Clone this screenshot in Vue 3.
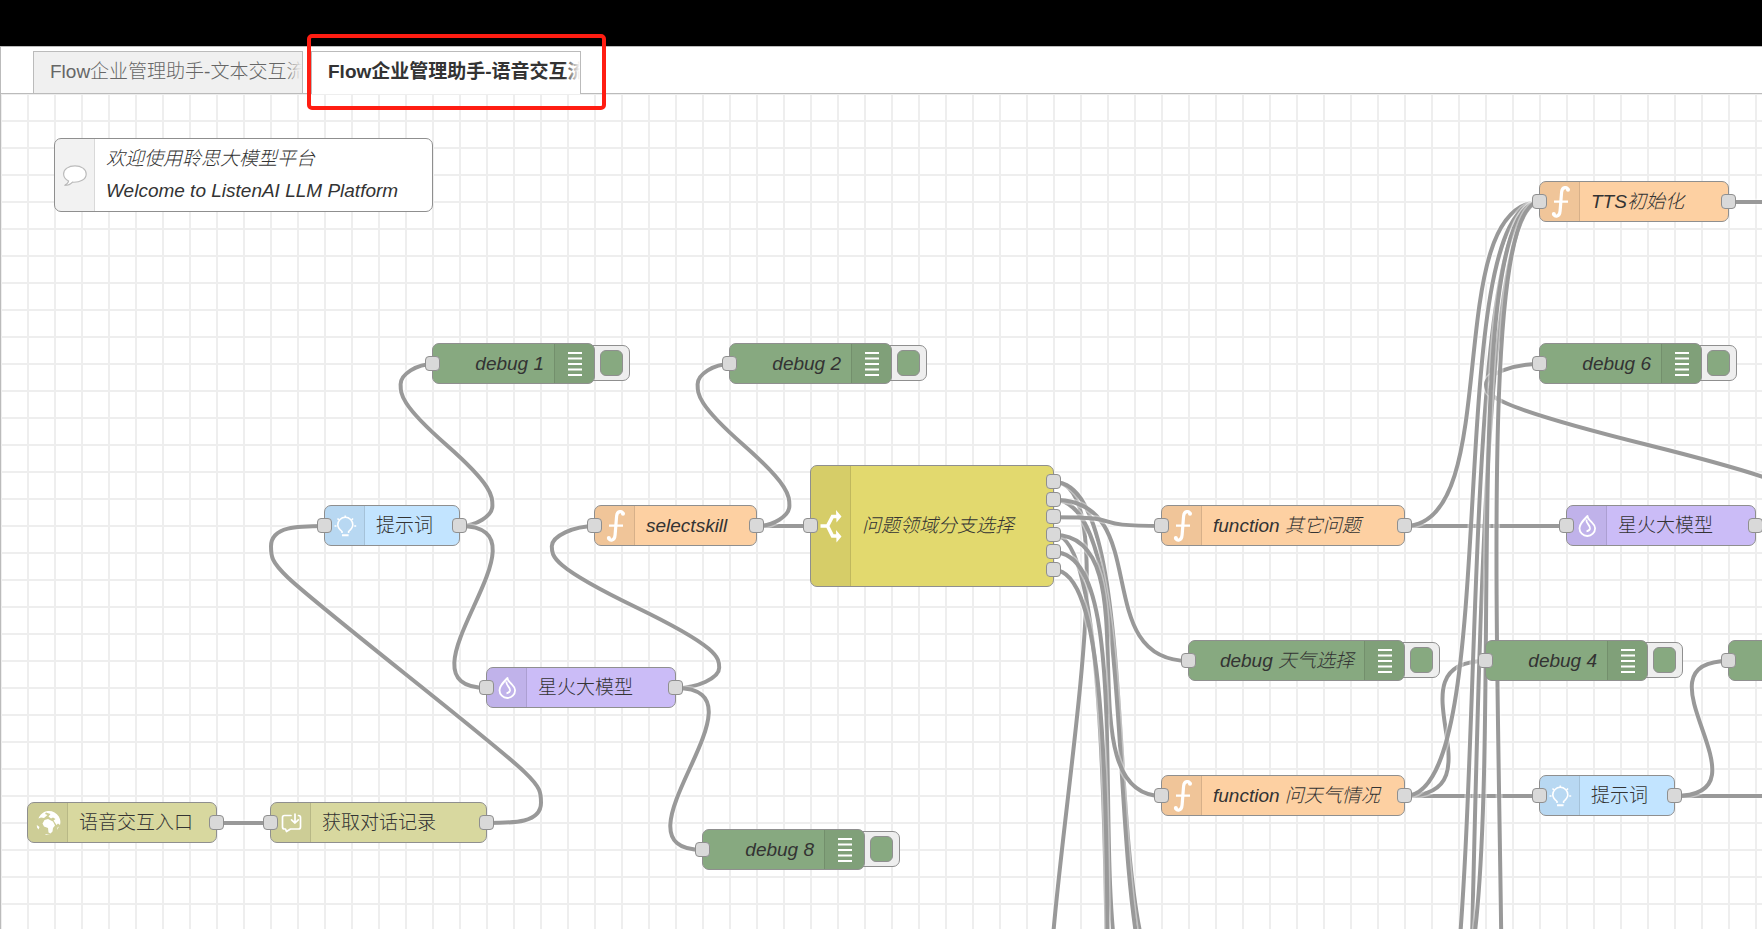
<script setup>
const CELL = 27
const ZOOM = CELL / 20

const tabs = [
  { label: 'Flow企业管理助手-文本交互流程', active: false },
  { label: 'Flow企业管理助手-语音交互流程', active: true },
]

// Columns and rows are counted in grid cells; row is the vertical centre of the node.
const nodes = [
  { col: 2, row: 3, w: 14, kind: 'comment', icon: 'comment', lines: ['欢迎使用聆思大模型平台', 'Welcome to ListenAI LLM Platform'] },
  { col: 16, row: 10, w: 6, kind: 'debug', label: 'debug 1' },
  { col: 27, row: 10, w: 6, kind: 'debug', label: 'debug 2' },
  { col: 57, row: 10, w: 6, kind: 'debug', label: 'debug 6' },
  { col: 57, row: 4, w: 7, kind: 'function', icon: 'function', label: 'TTS初始化' },
  { col: 12, row: 16, w: 5, kind: 'prompt', icon: 'bulb', label: '提示词' },
  { col: 22, row: 16, w: 6, kind: 'function', icon: 'function', label: 'selectskill' },
  { col: 30, row: 16, w: 9, kind: 'switch', icon: 'switch', label: '问题领域分支选择', outs: 6 },
  { col: 43, row: 16, w: 9, kind: 'function', icon: 'function', label: 'function 其它问题' },
  { col: 58, row: 16, w: 7, kind: 'model', icon: 'flame', label: '星火大模型' },
  { col: 44, row: 21, w: 8, kind: 'debug', label: 'debug 天气选择' },
  { col: 55, row: 21, w: 6, kind: 'debug', label: 'debug 4' },
  { col: 64, row: 21, w: 6, kind: 'debug', label: '' },
  { col: 18, row: 22, w: 7, kind: 'model', icon: 'flame', label: '星火大模型' },
  { col: 43, row: 26, w: 9, kind: 'function', icon: 'function', label: 'function 问天气情况' },
  { col: 57, row: 26, w: 5, kind: 'prompt', icon: 'bulb', label: '提示词' },
  { col: 1, row: 27, w: 7, kind: 'entry', icon: 'globe', label: '语音交互入口', noInput: true },
  { col: 10, row: 27, w: 8, kind: 'entry', icon: 'history', label: '获取对话记录' },
  { col: 26, row: 28, w: 6, kind: 'debug', label: 'debug 8' },
]

const outRow = (row, index, count) => row + (index - (count - 1) / 2) * 0.65
const sw = (index) => [39, outRow(16, index, 6)]

const links = [
  [[8, 27], [10, 27]],
  [[18, 27], [12, 16]],
  [[17, 16], [16, 10]],
  [[17, 16], [18, 22]],
  [[25, 22], [22, 16]],
  [[25, 22], [26, 28]],
  [[28, 16], [30, 16]],
  [[28, 16], [27, 10]],
  [sw(0), [40, 38]],
  [sw(0), [44, 34]],
  [sw(1), [44, 35]],
  [sw(1), [44, 21]],
  [sw(2), [43, 16]],
  [sw(3), [43, 60]],
  [sw(3), [43, 26]],
  [sw(4), [43, 35]],
  [sw(5), [43, 48]],
  [[52, 16], [58, 16]],
  [[52, 26], [57, 26]],
  [[62, 26], [72, 26]],
  [[62, 26], [64, 21]],
  [[52, 26], [55, 21]],
  [[64, 4], [70, 4]],
  [[52, 16], [57, 4]],
  [[52, 26], [57, 4]],
  [[52, 39], [57, 4]],
  [[65, 16], [57, 10]],
  [[52, 57], [57, 4]],
  [[53, 35], [57, 4]],
  [[54, 50], [57, 4]],
]

const REACH = 100
const HALF = 15

function wirePath([from, to]) {
  const [ox, oy, dx0, dy0] = [...from, ...to].map((v) => v * 20)
  const dx = dx0 - ox
  const dy = dy0 - oy
  const dist = Math.hypot(dx, dy)
  const p = (x, y) => `${Math.round(x * ZOOM * 10) / 10} ${Math.round(y * ZOOM * 10) / 10}`

  if (dx > 0) {
    const bend = dist < REACH ? 0.75 - 0.75 * ((REACH - dist) / REACH) : 0.75
    return `M${p(ox, oy)}C${p(ox + REACH * bend, oy)} ${p(dx0 - REACH * bend, dy0)} ${p(dx0, dy0)}`
  }

  const bend = 0.4 - 0.2 * Math.max(0, (REACH - Math.min(Math.abs(dx), Math.abs(dy))) / REACH)
  const dir = dy > 0 ? 1 : -1
  const lo = dy > 0 ? Math.min : Math.max
  const hi = dy > 0 ? Math.max : Math.min
  const midX = dx0 - dx / 2
  const midY = dy0 - dy / 2
  const y1 = (dy0 + midY) / 2
  const topX = ox + REACH * bend
  const topY = lo(y1 - dy / 2, oy + dir * HALF)
  const botX = dx0 - REACH * bend
  const botY = hi(y1, dy0 - dir * HALF)
  const x1 = (ox + topX) / 2
  const cp = [
    [x1, oy],
    [topX, hi(oy, topY - dir * HALF)],
    [x1, lo(midY, topY + dir * HALF)],
    [botX, hi(midY, botY - dir * HALF)],
    [(dx0 + botX) / 2, dy0],
  ]
  if (cp[2][1] === topY + dir * HALF) {
    if (Math.abs(dy) < HALF * 10) {
      cp[1][1] = topY - (dir * HALF) / 2
      cp[3][1] = botY - (dir * HALF) / 2
    }
    cp[2][0] = topX
  }
  return `M${p(ox, oy)}C${p(...cp[0])} ${p(...cp[1])} ${p(topX, topY)}` +
    `S${p(...cp[2])} ${p(midX, midY)}S${p(...cp[3])} ${p(botX, botY)}S${p(...cp[4])} ${p(dx0, dy0)}`
}

const wires = links.map(wirePath)

function nodeStyle(n) {
  const height = n.kind === 'comment' ? 74 : n.kind === 'switch' ? 122 : 41
  return {
    left: `${n.col * CELL - 1}px`,
    top: `${n.row * CELL - Math.ceil(height / 2)}px`,
    width: `${n.w * CELL + 1}px`,
    height: `${height}px`,
  }
}

function ports(n) {
  if (n.kind === 'comment') return []
  const list = []
  if (!n.noInput) list.push([n.col, n.row])
  if (n.kind !== 'debug') {
    const count = n.outs || 1
    for (let i = 0; i < count; i++) list.push([n.col + n.w, outRow(n.row, i, count)])
  }
  return list.map(([c, r]) => ({ left: `${c * CELL - 8}px`, top: `${Math.round(r * CELL) - 8}px` }))
}
</script>

<template>
  <div class="page">
    <div class="band"></div>
    <nav class="tabbar" aria-label="Flows">
      <ul class="tabs">
        <li v-for="t in tabs" :key="t.label" class="tab" :class="{ active: t.active }">
          <a href="#" class="tab-link">{{ t.label }}</a>
          <span v-if="t.active" class="marker"></span>
        </li>
      </ul>
    </nav>

    <main class="canvas">
      <svg class="wires" aria-hidden="true">
        <defs>
          <symbol id="i-function" viewBox="0 0 40 40">
            <path d="M28 8C27.400 4.800 22.200 4.300 21.600 10.200L20.100 28.800C19.600 35.200 15 35.200 13.600 31.800" fill="none" stroke="#fff" stroke-width="3.200" />
            <circle cx="28" cy="7.800" r="2" fill="#fff" /><circle cx="13.800" cy="31.900" r="2" fill="#fff" />
            <path d="M14 19.700H28" stroke="#fff" stroke-width="2.200" />
          </symbol>
          <symbol id="i-debug" viewBox="0 0 40 40">
            <path d="M13 9H27M13 14.500H27M13 20H27M13 25.500H27M13 31H27" stroke="#fff" stroke-width="2" />
          </symbol>
          <symbol id="i-switch" viewBox="0 0 40 40">
            <path d="M9.500 20H16.500L21.500 10.500H26M16.500 20L21.500 30H26" fill="none" stroke="#fff" stroke-width="3.600" />
            <path d="M25 4L30.500 10.500L25.500 16.500ZM25 24L30.500 30.500L25.500 36.500Z" fill="#fff" />
          </symbol>
          <symbol id="i-bulb" viewBox="0 0 40 40">
            <g fill="none" stroke="#fff" stroke-width="1.600">
              <path d="M17 27V25.500C14.500 23.500 12.800 21.500 12.800 18.800A7.500 7.500 0 0 1 27.800 18.800C27.800 21.500 26 23.500 23.600 25.500V27" />
              <path d="M17 29.300H23.600" stroke-width="2" />
              <path d="M20.300 9.500V11.500M12.500 12.500L14 14M28 12.500L26.600 14M9.500 20H11.500M29.200 20H31.200" />
            </g>
          </symbol>
          <symbol id="i-flame" viewBox="0 0 40 40">
            <path d="M20.500 10C16 14.500 12.500 18 12.500 22.200A7.800 7.800 0 0 0 28.100 22.200C28.100 19 26 17.500 24 15.500C22 13.500 20.500 12.500 20.500 10ZM19.500 13.500C18.500 17.500 23.500 19 23 22.500C22.700 24.300 21 25 19.500 25.300" fill="none" stroke="#fff" stroke-width="1.800" stroke-linejoin="round" />
          </symbol>
          <symbol id="i-history" viewBox="0 0 40 40">
            <g fill="none" stroke="#fff" stroke-width="1.700" stroke-linecap="round" stroke-linejoin="round">
              <path d="M20 12.500H13.500Q11.500 12.500 11.500 14.500V24Q11.500 26 13.500 26H14.500L15.500 28.500L19.500 26H27.500Q29.500 26 29.500 24V14.500Q29.500 12.500 27.500 12.500" />
              <path d="M24 11V19.500M20.500 16.800L24 20L27.300 16.800" />
            </g>
          </symbol>
          <symbol id="i-globe" viewBox="0 0 40 40">
            <path d="M10.500 15.500C12 11.500 15.500 8.500 20 8C24 7.600 28.500 9.500 30.800 13.500C32.500 16.500 32.800 19 32 22L30 20.500L28.500 22L25.500 17.500L27.500 16L25 14.500L23 15.500L20.500 13.500L22.500 11L18 9.500L17 11L19.500 12L16 15L13 14.500ZM16.500 17L20 16L25 18.500L27 22.500L25 25L24.500 28.500L22.500 30.500L20.500 29.500L20 25L16 23.500L14.500 20.500ZM8.800 22L11.500 24L10.500 26.500L9 24.500ZM29.500 24.500L31 23.500L29 27ZM18 31L22 32L17 31.800Z" fill="#fff" />
          </symbol>
          <symbol id="i-comment" viewBox="0 0 40 40">
            <path d="M20 10.800C13.500 10.800 8.600 14.300 8.600 19C8.600 22 10.600 24.500 13.600 26C13.200 28.200 11.500 29.500 9.500 30.500C13.200 30.500 16 29 17.500 27.200C25 27.600 31.200 24.500 31.200 19C31.200 14.300 26.300 10.800 20 10.800Z" fill="#fff" stroke="#bbb" stroke-width="1.200" />
          </symbol>
        </defs>
        <g v-for="(d, i) in wires" :key="i">
          <path class="wire-outline" :d="d" />
          <path class="wire" :d="d" />
        </g>
      </svg>

      <template v-for="(n, i) in nodes" :key="i">
        <div class="node" :class="n.kind" :style="nodeStyle(n)">
          <button v-if="n.kind === 'debug'" type="button" class="toggle" :aria-label="`${n.label || 'debug'} on/off`">
            <span class="toggle-inner"></span>
          </button>
          <div class="body">
            <div class="strip">
              <svg class="icon" aria-hidden="true"><use :href="`#i-${n.icon || 'debug'}`" /></svg>
            </div>
            <div class="label">
              <template v-if="n.lines"><p v-for="l in n.lines" :key="l" class="line">{{ l }}</p></template>
              <template v-else>{{ n.label }}</template>
            </div>
          </div>
        </div>
        <span v-for="(s, k) in ports(n)" :key="`${i}-${k}`" class="port" :style="s"></span>
      </template>
    </main>
  </div>
</template>

<style>
body {
  margin: 0;
  background: #fff;
}
</style>

<style scoped>
.page {
  display: flex;
  flex-direction: column;
  height: 100vh;
  overflow: hidden;
  font-family: "Liberation Sans", Arial, "Noto Sans CJK SC", sans-serif;
  font-size: 19px;
  font-weight: 300;
  color: #333;
}

.band {
  flex: none;
  height: 46px;
  background: #000;
}

.tabbar {
  flex: none;
  box-sizing: border-box;
  height: 48px;
  padding: 4px 0 0 32px;
  border: 1px solid #bbb;
  border-right: 0;
  background: #fff;
}

.tabs {
  display: flex;
  gap: 8px;
  margin: 0;
  padding: 0;
  list-style: none;
}

.tab {
  position: relative;
  box-sizing: border-box;
  width: 270px;
  height: 42px;
  border: 1px solid #bbb;
  border-bottom: 0;
  background: #f0f0f0;
}

.tab.active {
  z-index: 2;
  height: 43px;
  background: #fff;
}

.tab-link {
  display: block;
  overflow: hidden;
  padding-left: 16px;
  line-height: 40px;
  white-space: nowrap;
  color: #666;
  text-decoration: none;
}

.active .tab-link {
  font-weight: 700;
  color: #333;
}

.tab-link::after {
  content: "";
  position: absolute;
  top: 0;
  right: 0;
  width: 16px;
  height: 40px;
  background: linear-gradient(to right, #f0f0f000, #f0f0f0);
}

.active .tab-link::after {
  background: linear-gradient(to right, #fff0, #fff);
}

.marker {
  position: absolute;
  inset: -18px -26px -16px -5px;
  border: 4px solid #ff1d12;
  border-radius: 5px;
  pointer-events: none;
}

.canvas {
  position: relative;
  flex: 1;
  min-height: 0;
  overflow: hidden;
  border-left: 1px solid #bbb;
  background-color: #fff;
  background-image:
    linear-gradient(to right, #eee 2px, transparent 2px),
    linear-gradient(to bottom, #eee 2px, transparent 2px);
  background-size: 27px 27px;
  background-position: -1px -1px;
}

.wires {
  position: absolute;
  inset: 0;
  width: 100%;
  height: 100%;
}

.wire,
.wire-outline {
  fill: none;
  stroke: #999;
  stroke-width: 4;
}

.wire-outline {
  stroke: #fff;
  stroke-opacity: 0.4;
  stroke-width: 7;
}

.node {
  position: absolute;
}

.body {
  position: relative;
  display: flex;
  box-sizing: border-box;
  height: 100%;
  overflow: hidden;
  border: 1px solid #8f8f8f;
  border-radius: 7px;
}

.strip {
  display: flex;
  flex: none;
  align-items: center;
  box-sizing: border-box;
  width: 40px;
  border-right: 1px solid #0000001a;
  background: #0000000d;
}

.icon {
  flex: none;
  width: 40px;
  height: 40px;
}

.label {
  display: flex;
  flex: 1;
  flex-direction: column;
  justify-content: center;
  padding-left: 11px;
  line-height: 32px;
  white-space: nowrap;
}

.line {
  margin: 0;
}

.comment .body {
  background: #fff;
}

.comment .label,
.function .label,
.switch .label,
.debug .label {
  font-style: italic;
}

.function .body {
  background: #fdd0a2;
}

.switch .body {
  background: #e2d96e;
}

.prompt .body {
  background: #c2e4ff;
}

.model .body {
  background: #cbbcf7;
}

.entry .body {
  background: #d8d89f;
}

.debug .body {
  flex-direction: row-reverse;
  background: #87a980;
}

.debug .strip {
  border-right: 0;
  border-left: 1px solid #0000001a;
}

.debug .label {
  align-items: flex-end;
  padding: 0 10px 0 0;
}

.toggle {
  position: absolute;
  top: 2px;
  right: -35px;
  display: flex;
  align-items: center;
  justify-content: flex-end;
  box-sizing: border-box;
  width: 44px;
  height: 36px;
  padding: 0 6px 0 0;
  border: 1px solid #8f8f8f;
  border-radius: 7px;
  background: #eee;
}

.toggle-inner {
  box-sizing: border-box;
  width: 23px;
  height: 26px;
  border: 1px solid #8f8f8f;
  border-radius: 6px;
  background: #87a980;
}

.port {
  position: absolute;
  box-sizing: border-box;
  width: 15px;
  height: 15px;
  border: 1px solid #8f8f8f;
  border-radius: 4px;
  background: #d9d9d9;
}
</style>
